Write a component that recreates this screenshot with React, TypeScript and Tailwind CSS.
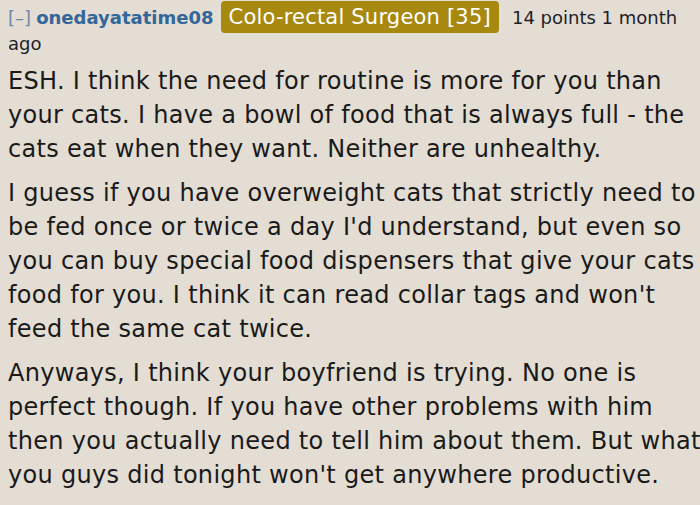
const paragraphs = [
  [
    "ESH. I think the need for routine is more for you than",
    "your cats. I have a bowl of food that is always full - the",
    "cats eat when they want. Neither are unhealthy.",
  ],
  [
    "I guess if you have overweight cats that strictly need to",
    "be fed once or twice a day I'd understand, but even so",
    "you can buy special food dispensers that give your cats",
    "food for you. I think it can read collar tags and won't",
    "feed the same cat twice.",
  ],
  [
    "Anyways, I think your boyfriend is trying. No one is",
    "perfect though. If you have other problems with him",
    "then you actually need to tell him about them. But what",
    "you guys did tonight won't get anywhere productive.",
  ],
];

export default function App() {
  return (
    <div className="w-[700px] h-[505px] overflow-hidden bg-[#e3ddd3] px-2 text-[#1a1a1a] font-['DejaVu_Sans',Verdana,sans-serif]">
      <div className="pt-[5px] leading-[25px]">
        <span className="text-[18px] text-[#7288aa]">[–]</span>{" "}
        <span className="text-[18px] font-bold text-[#336699]">onedayatatime08</span>{" "}
        <span className="mx-[2px] rounded-[4px] bg-[#a8890f] px-[8px] py-[4px] text-[21px] tracking-[0.2px] text-white">
          Colo-rectal Surgeon [35]
        </span>{" "}
        <span className="ml-[6px] text-[18px] text-[#1e1e2a]">14 points 1 month ago</span>
      </div>
      <div className="mt-[7px] flex flex-col gap-[10px] text-[24px] leading-[34px] tracking-[0.3px]">
        {paragraphs.map((lines, i) => (
          <p key={i} className="whitespace-nowrap">
            {lines.map((line, j) => (
              <span key={j} className="block">{line}</span>
            ))}
          </p>
        ))}
      </div>
    </div>
  );
}
